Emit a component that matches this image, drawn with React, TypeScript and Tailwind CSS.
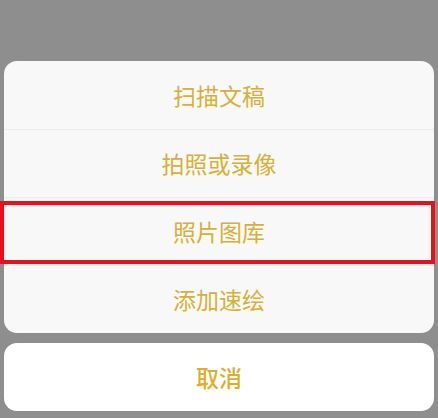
const items = ['扫描文稿', '拍照或录像', '照片图库', '添加速绘']

export default function App() {
  return (
    <div
      className="flex h-[418px] w-[438px] flex-col bg-[#8e8e8e] px-[4px] pt-[61px] pb-[4px]"
      style={{ fontFamily: '"Noto Sans CJK SC", "Noto Sans", sans-serif' }}
    >
      <div className="flex flex-col rounded-[13px] bg-[#f8f8f8]">
        {items.map((label, i) => (
          <div
            key={label}
            className={`relative flex h-[68px] items-center justify-center text-[23px] text-[#d7b038] ${
              i > 0 ? 'border-t border-[#ededed]' : ''
            }`}
          >
            {label}
            {i === 2 && (
              <div className="pointer-events-none absolute top-[3px] bottom-[1px] left-[-4px] right-[-1px] border-[4px] border-[#e8101a]" />
            )}
          </div>
        ))}
      </div>
      <div className="mt-[10px] flex h-[68px] items-center justify-center rounded-[13px] bg-white text-[23px] font-medium text-[#dcae2a]">
        取消
      </div>
    </div>
  )
}
